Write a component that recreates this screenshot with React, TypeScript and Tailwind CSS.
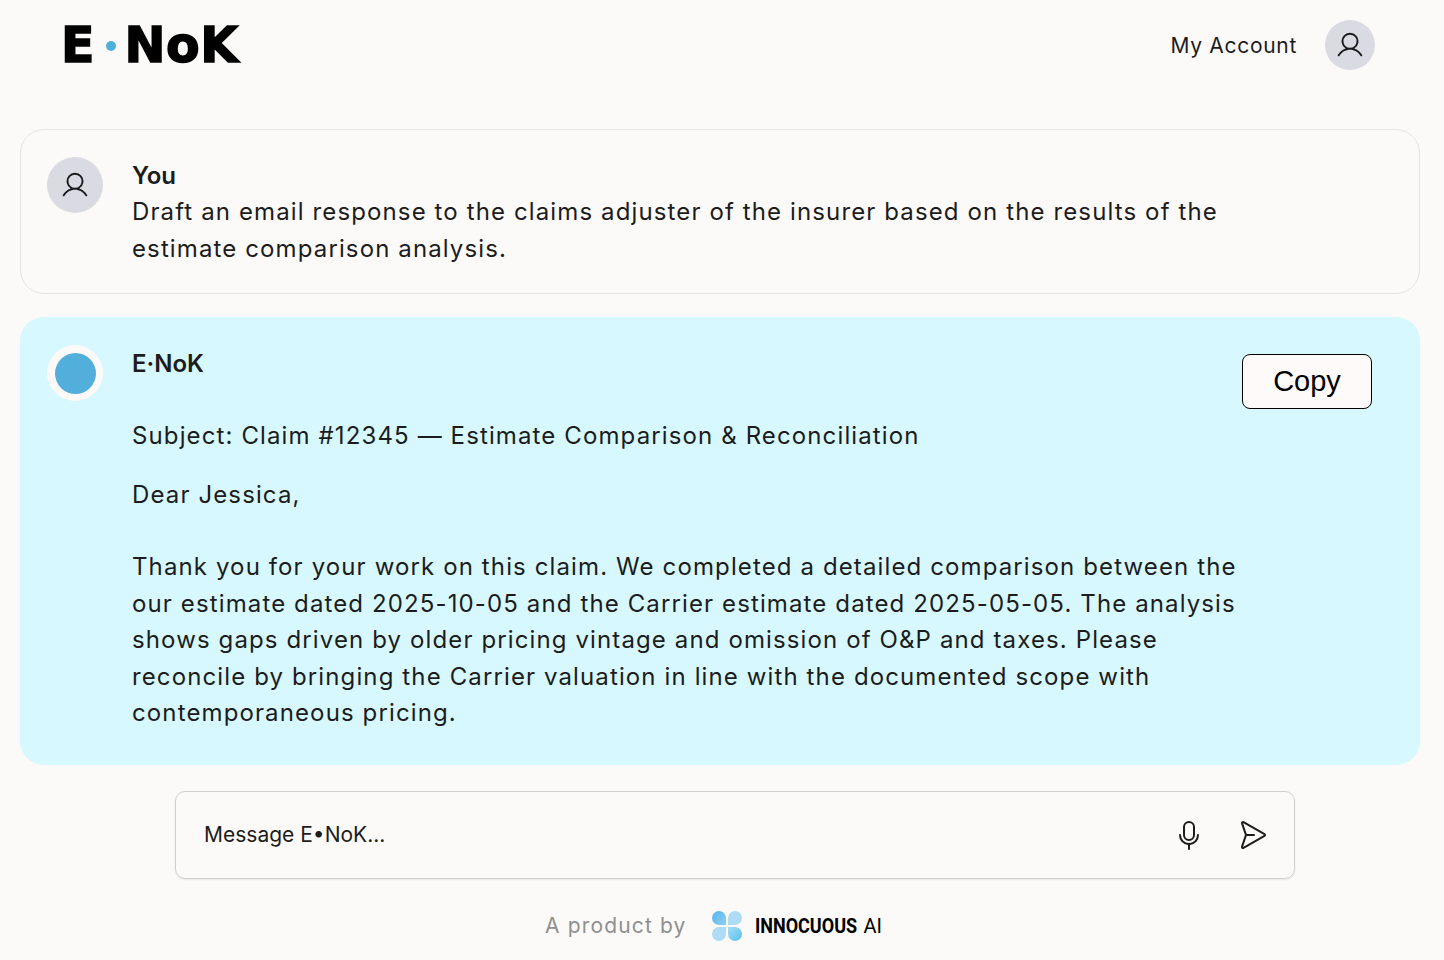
import { PiUser, PiMicrophone, PiPaperPlaneRight } from "react-icons/pi";

function Avatar({ size }: { size: "sm" | "lg" }) {
  return (
    <div className={size === "lg" ? "flex h-[50px] w-[50px] shrink-0 items-center justify-center rounded-full bg-[#d9dae2]" : "flex h-14 w-14 shrink-0 items-center justify-center rounded-full bg-[#d9dae2]"}>
      <PiUser className="h-[30px] w-[30px] text-[#1a1a1a]" />
    </div>
  );
}

function Flower() {
  return (
    <svg width="32" height="30" viewBox="0 0 32 30" className="block">
      <defs>
        <linearGradient id="fa" x1="0" y1="0" x2="1" y2="1">
          <stop offset="0" stopColor="#58b2ea" />
          <stop offset="1" stopColor="#8ed0f2" />
        </linearGradient>
        <linearGradient id="fb" x1="0" y1="0" x2="1" y2="1">
          <stop offset="0" stopColor="#a8dcf5" />
          <stop offset="1" stopColor="#55c0ee" />
        </linearGradient>
      </defs>
      <path d="M8 0a7 7 0 0 1 7 7v7H8A7 7 0 0 1 8 0z" fill="url(#fa)" />
      <path d="M24 0a7 7 0 0 1 0 14h-7V7a7 7 0 0 1 7-7z" fill="#aedcf5" />
      <path d="M8 16h7v7a7 7 0 1 1-7-7z" fill="#aedcf5" />
      <path d="M17 16h7a7 7 0 1 1-7 7z" fill="url(#fb)" />
    </svg>
  );
}

export default function App() {
  return (
    <div className="flex h-[960px] w-[1444px] flex-col overflow-hidden bg-[#fbfaf8] font-['Inter','Noto_Sans',sans-serif] text-[#1c1c1c]">
      <header className="flex h-[90px] items-center justify-between pl-[61px] pr-[69px]">
        <div className="mt-px flex items-center font-['DejaVu_Sans',sans-serif] text-[49px] leading-none font-bold text-black [-webkit-text-stroke:1.5px_black]">
          <span>E</span>
          <span className="mr-[8px] ml-[12px] h-[10px] w-[10px] rounded-full bg-[#4fb0dc]" />
          <span className="tracking-[0.6px]">NoK</span>
        </div>
        <div className="flex items-center gap-[28px]">
          <span className="mt-px text-[21px] tracking-[0.7px]">My Account</span>
          <Avatar size="lg" />
        </div>
      </header>

      <main className="mt-[39px] flex flex-col gap-[23px] pr-6 pl-5">
        <section className="flex h-[165px] gap-[29px] rounded-[24px] border border-[#e4e4e4] pr-[27px] pl-[26px] pt-[27px]">
          <Avatar size="sm" />
          <div className="w-[1130px] pt-px text-[24px] leading-[36.5px] tracking-[1.12px]">
            <div className="font-semibold leading-[36px] tracking-normal">You</div>
            <div>Draft an email response to the claims adjuster of the insurer based on the results of the estimate comparison analysis.</div>
          </div>
        </section>

        <section className="relative flex h-[448px] gap-[29px] rounded-[24px] bg-[#d6f8fe] pr-7 pl-[27px] pt-7">
          <div className="flex h-14 w-14 shrink-0 items-center justify-center rounded-full bg-[#fbfaf8]">
            <div className="h-[41px] w-[41px] rounded-full bg-[#52aedb]" />
          </div>
          <div className="w-[1130px] pt-px text-[24px] leading-[36.5px] tracking-[1.12px]">
            <div className="font-semibold leading-[36px] tracking-normal">E·NoK</div>
            <div className="mt-[36px]">Subject: Claim #12345 — Estimate Comparison &amp; Reconciliation</div>
            <div className="mt-[22px]">Dear Jessica,</div>
            <div className="mt-[36px]">Thank you for your work on this claim. We completed a detailed comparison between the our estimate dated 2025-10-05 and the Carrier estimate dated 2025-05-05. The analysis shows gaps driven by older pricing vintage and omission of O&amp;P and taxes. Please reconcile by bringing the Carrier valuation in line with the documented scope with contemporaneous pricing.</div>
          </div>
          <button className="absolute top-[37px] right-[48px] h-[55px] w-[130px] rounded-[8px] border border-black bg-[#fffafa] font-['Liberation_Sans',sans-serif] text-[29px] text-black">Copy</button>
        </section>
      </main>

      <div className="mt-[26px] ml-[175px] flex h-[88px] w-[1120px] items-center rounded-[10px] border border-[#d0d0d0] pr-[26px] pl-7 shadow-[0_1px_2px_rgba(0,0,0,0.08)]">
        <span className="flex-1 text-[21px]">Message E•NoK...</span>
        <PiMicrophone className="mr-[31px] h-[32px] w-[32px] text-[#1c1c1c]" />
        <PiPaperPlaneRight className="h-[32px] w-[32px] text-[#1c1c1c]" />
      </div>

      <footer className="mt-[31px] flex items-center pl-[545px]">
        <span className="text-[21px] tracking-[1.15px] text-[#8f8f8f]">A product by</span>
        <span className="ml-[24px]"><Flower /></span>
        <span className="ml-[12px] inline-block w-[103px] origin-left scale-x-[0.9] font-['Roboto',sans-serif] text-[20px] whitespace-nowrap font-bold text-black">INNOCUOUS</span>
        <span className="ml-[6px] font-['Roboto',sans-serif] text-[20px] text-black">AI</span>
      </footer>
    </div>
  );
}
